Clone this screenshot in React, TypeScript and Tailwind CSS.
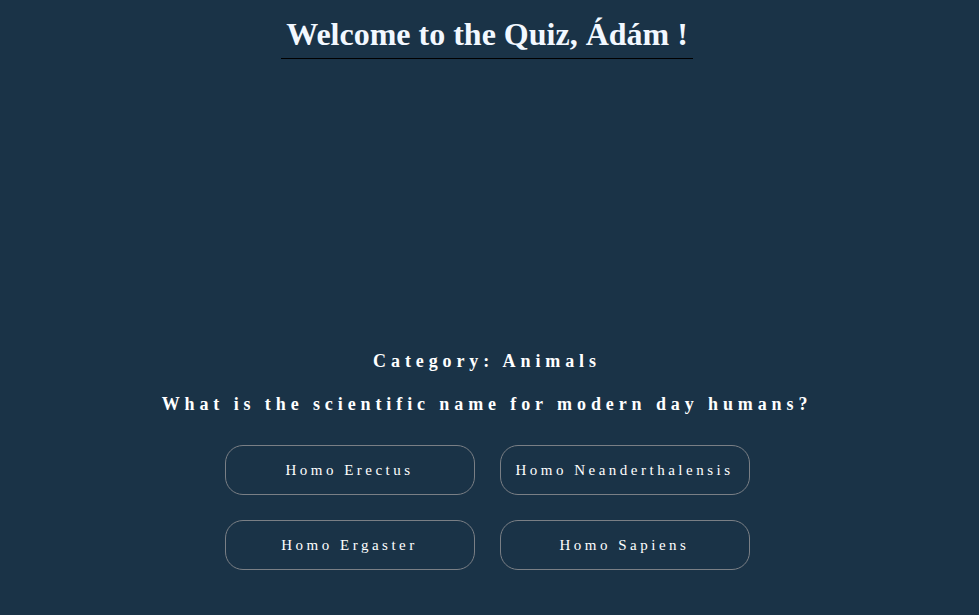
const answers = ["Homo Erectus", "Homo Neanderthalensis", "Homo Ergaster", "Homo Sapiens"];

const App = () => {
    return (
        <div
            className="min-h-[615px] w-full bg-[#1a3347] text-white pr-[5px]"
            style={{ fontFamily: '"Liberation Serif", "Times New Roman", serif' }}>
            <div className="flex flex-col items-center">
                <h1 className="mt-[15px] px-[5px] pb-[5px] border-b border-black text-[32px] font-bold leading-[38px] text-[#f2f8ff]">
                    Welcome to the Quiz, Ádám !
                </h1>
                <div className="h-[291px]" />
                <h2 className="text-[18px] font-bold tracking-[4.9px] leading-[22px]">
                    Category: Animals
                </h2>
                <h3 className="mt-[21px] text-[18px] font-bold tracking-[4.9px] leading-[22px]">
                    What is the scientific name for modern day humans?
                </h3>
                <div className="mt-[30px] grid grid-cols-2 gap-[25px]">
                    {answers.map((a) => (
                        <button
                            key={a}
                            className="w-[250px] h-[50px] rounded-[18px] border border-[#7a7f85] text-[15px] tracking-[3.5px] text-white">
                            {a}
                        </button>
                    ))}
                </div>
            </div>
        </div>
    );
};

export default App;
